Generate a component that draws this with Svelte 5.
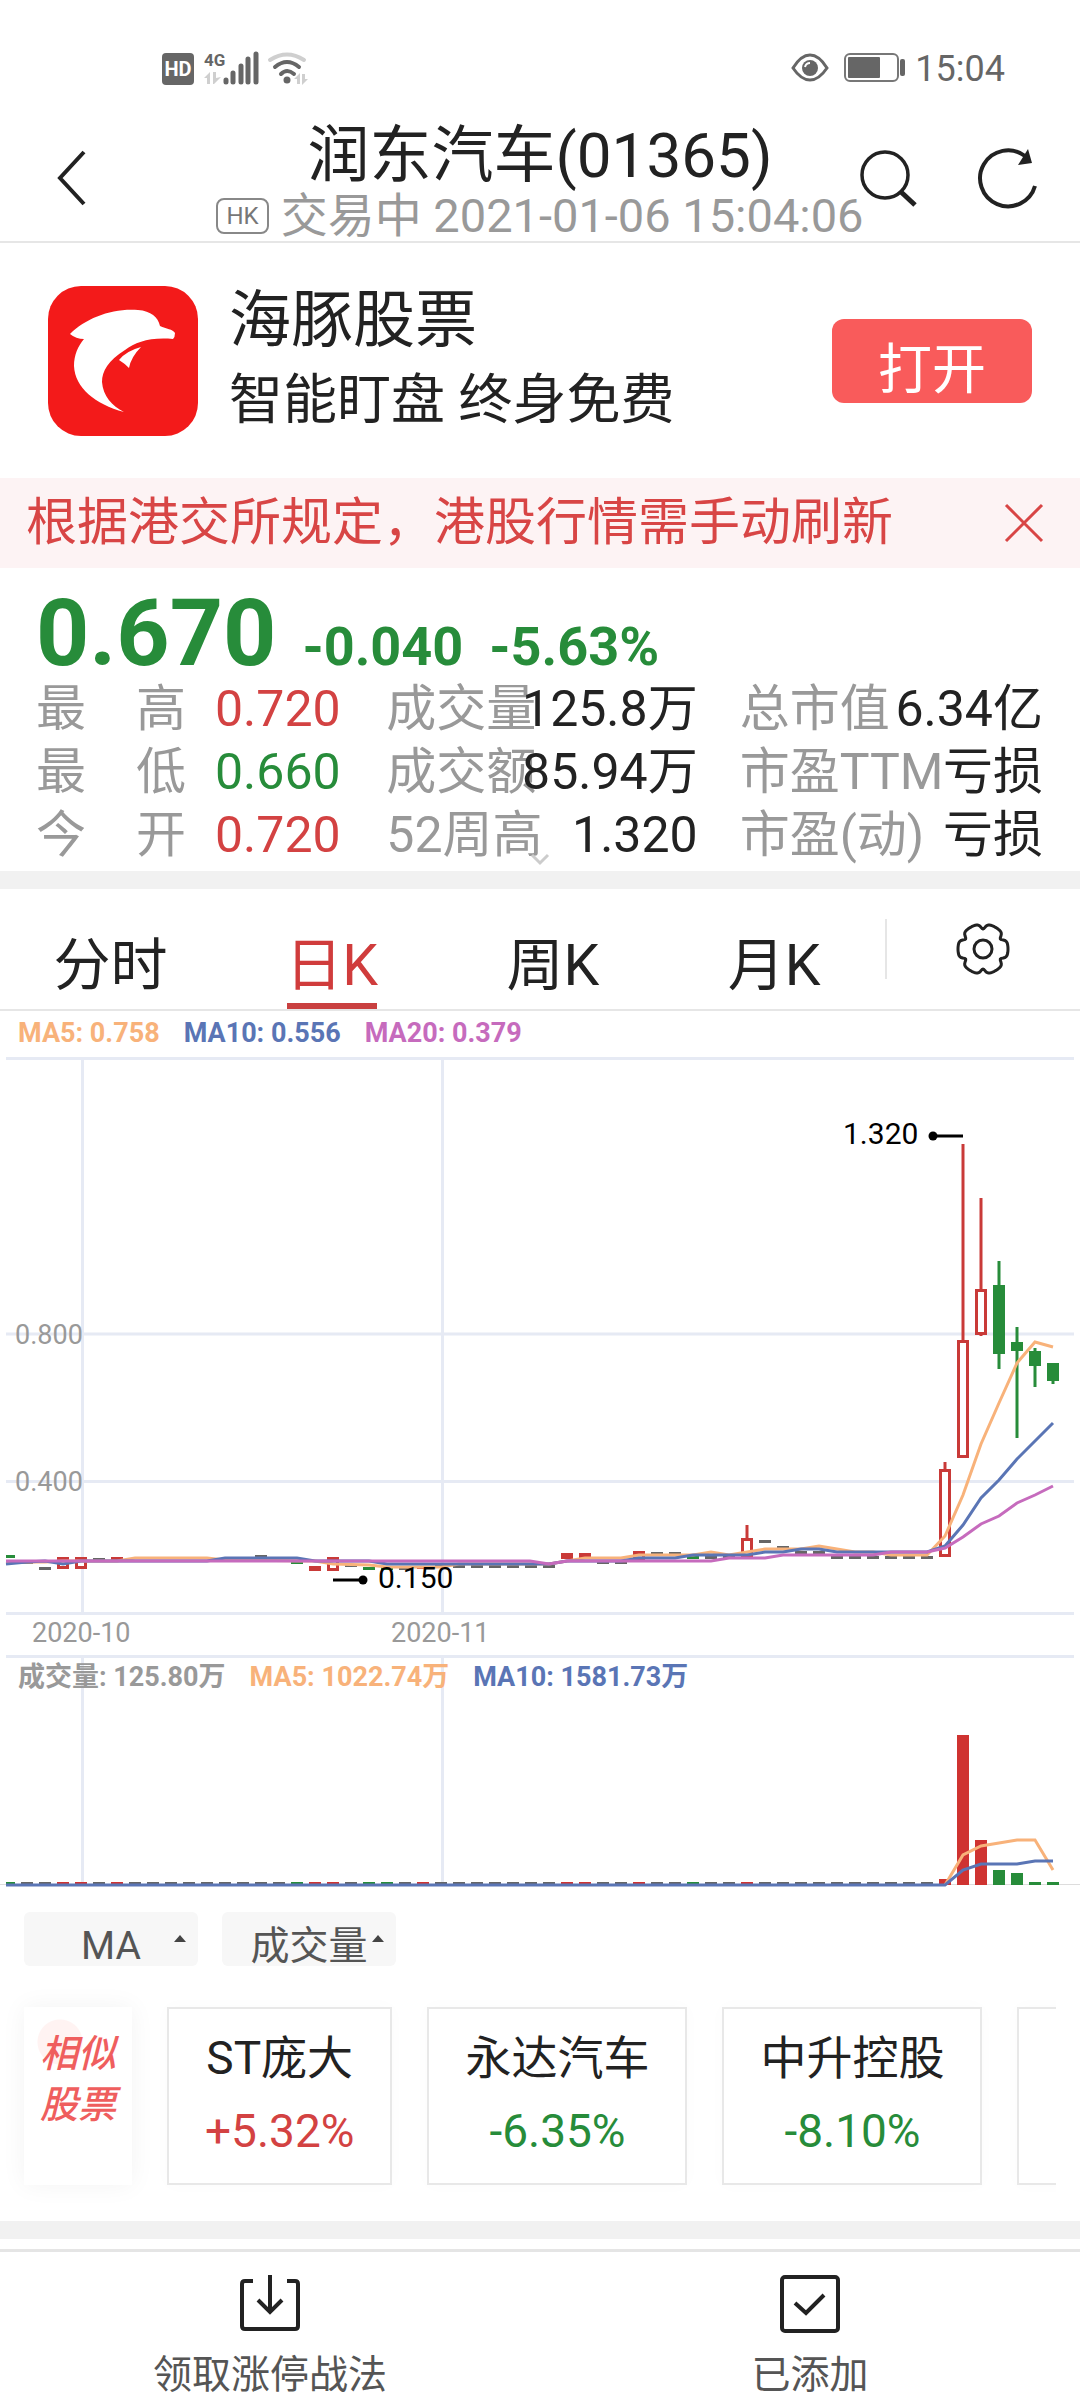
<script>
  const stats = [
    { label: '最　高', value: '0.720', tone: 'up' },
    { label: '成交量', value: '125.8万', tone: '' },
    { label: '总市值', value: '6.34亿', tone: '' },
    { label: '最　低', value: '0.660', tone: 'down' },
    { label: '成交额', value: '85.94万', tone: '' },
    { label: '市盈TTM', value: '亏损', tone: '' },
    { label: '今　开', value: '0.720', tone: 'up' },
    { label: '52周高', value: '1.320', tone: '' },
    { label: '市盈(动)', value: '亏损', tone: '' }
  ];

  const tabs = ['分时', '日K', '周K', '月K'];
  let active = $state('日K');
  let noticeOpen = $state(true);

  // Gear outline: a circle with six soft notches
  const gear = Array.from({ length: 120 }, (_, i) => {
    const deg = i * 3;
    const d = (((deg - 30) % 60) + 60) % 60;
    const off = Math.min(d, 60 - d);
    const r = 25 - 5 * Math.exp(-((off / 8) ** 2));
    const a = (deg * Math.PI) / 180;
    return `${(r * Math.cos(a)).toFixed(2)},${(r * Math.sin(a)).toFixed(2)}`;
  }).join(' ');

  const RED = '#c93a38';
  const GREEN = '#278c3a';
  const GREY = '#666';

  // Days without a move are a short dash: [x, y, colour]
  const dashes = [
    [9, 1556, GREEN], [27, 1562, GREY], [45, 1568, GREY], [99, 1559, GREY], [117, 1558, RED],
    [261, 1556, GREY], [297, 1562, GREEN], [351, 1565, GREY], [369, 1568, GREEN], [387, 1568, GREEN],
    [405, 1568, GREY], [423, 1567, RED],
    ...[441, 459, 477, 495, 513, 531, 549].map((x) => [x, 1566, GREY]),
    [603, 1562, GREY], [621, 1562, GREY], [657, 1553, GREY], [675, 1553, GREY],
    [693, 1557, GREEN], [711, 1557, GREY], [729, 1557, GREY],
    [765, 1541, GREY], [783, 1547, GREY], [801, 1552, GREY], [819, 1552, GREY],
    ...[837, 855, 873, 891, 909, 927].map((x) => [x, 1557, GREY])
  ];

  // [x, high, bodyTop, bodyBottom, low, kind]
  const candles = [
    [63, 1557, 1557, 1569, 1569, 'rise'],
    [81, 1557, 1557, 1569, 1569, 'rise'],
    [315, 1566, 1566, 1571, 1571, 'solid'],
    [333, 1557, 1557, 1571, 1571, 'rise'],
    [567, 1553, 1553, 1559, 1559, 'solid'],
    [585, 1553, 1553, 1559, 1559, 'solid'],
    [639, 1551, 1551, 1562, 1562, 'rise'],
    [747, 1525, 1538, 1557, 1557, 'rise'],
    [945, 1462, 1469, 1557, 1557, 'rise'],
    [963, 1144, 1340, 1458, 1458, 'rise'],
    [981, 1198, 1289, 1335, 1336, 'rise'],
    [999, 1261, 1285, 1354, 1369, 'fall'],
    [1017, 1327, 1342, 1351, 1438, 'fall'],
    [1035, 1348, 1351, 1366, 1387, 'fall'],
    [1053, 1363, 1363, 1381, 1384, 'fall']
  ];

  const ma5 = '6,1562 45,1562 63,1561 117,1561 135,1558 207,1558 225,1560 315,1561 333,1564 369,1565 387,1567 441,1567 459,1564 549,1564 567,1561 585,1558 621,1558 639,1555 693,1555 711,1552 729,1555 747,1552 765,1549 801,1549 819,1546 837,1549 855,1552 873,1552 891,1555 927,1555 945,1536 963,1495 981,1444 999,1403 1017,1363 1035,1342 1053,1347';
  const ma10 = '6,1564 27,1562 45,1561 63,1564 81,1561 207,1561 225,1558 297,1558 315,1561 369,1561 387,1564 549,1564 567,1561 621,1561 639,1558 675,1558 693,1555 747,1555 765,1552 783,1552 801,1549 819,1549 837,1552 927,1552 945,1546 963,1525 981,1498 999,1480 1017,1459 1035,1441 1053,1423';
  const ma20 = '6,1561 530,1561 549,1564 567,1561 711,1561 729,1558 765,1558 783,1555 873,1555 891,1552 927,1552 945,1548 963,1537 981,1524 999,1516 1017,1503 1035,1495 1053,1486';

  const volRed = [63, 81, 117, 315, 333, 423, 567, 585, 639, 747, 945, 963, 981];
  const volGreen = [9, 297, 369, 387, 693, 999, 1017, 1035, 1053];
  const volTop = { 945: 1879, 963: 1735, 981: 1840, 999: 1870, 1017: 1873 };
  const volumes = Array.from({ length: 59 }, (_, i) => {
    const x = 9 + i * 18;
    const color = volRed.includes(x) ? '#cf3331' : volGreen.includes(x) ? GREEN : GREY;
    return { x, top: volTop[x] ?? 1882, color };
  });

  const peers = [
    { name: 'ST庞大', change: '+5.32%', tone: 'up' },
    { name: '永达汽车', change: '-6.35%', tone: 'down' },
    { name: '中升控股', change: '-8.10%', tone: 'down' }
  ];
</script>

<div class="page">
  <div class="status">
    <svg width="146" height="34" viewBox="162 51 146 34" aria-hidden="true">
      <rect x="162" y="53" width="32" height="32" rx="4" fill="#666" />
      <text x="178" y="76" font-size="20" font-weight="700" fill="#fff" text-anchor="middle">HD</text>
      <text x="204" y="66" font-size="17" font-weight="700" fill="#666">4G</text>
      <g stroke="#666" stroke-width="5" stroke-linecap="round">
        <path d="M226 80v2M233 73v9M241 66v16M248 59v23M256 54v28" />
      </g>
      <g fill="#cfcfcf">
        <path d="M204 78l6-6v12h-3v-6zM213 72h3v6l5-1-7 7h-1zM294 79l6-6v11h-3v-5zM302 74h3v5l3 0-6 6z" />
      </g>
      <g fill="none" stroke-linecap="round">
        <path d="M270 60Q287 49 304 60" stroke="#cfcfcf" stroke-width="4" />
        <path d="M275 67Q287 57 299 67" stroke="#666" stroke-width="4" />
        <path d="M281 74Q287 68 294 74" stroke="#666" stroke-width="4" />
      </g>
      <circle cx="287" cy="80" r="3.5" fill="#666" />
    </svg>
    <div class="right">
      <svg width="114" height="32" viewBox="793 53 114 32" aria-hidden="true">
        <path d="M794 69Q802 56 811 56T828 69Q820 81 811 81T794 69Z" fill="none" stroke="#666" stroke-width="3" />
        <circle cx="811" cy="69" r="8" fill="#666" />
        <path d="M806 68q1-4 5-4" fill="none" stroke="#fff" stroke-width="2" />
        <rect x="846" y="55" width="53" height="27" rx="5" fill="none" stroke="#777" stroke-width="2" />
        <rect x="849" y="58" width="32" height="21" rx="1" fill="#666" />
        <rect x="901" y="60" width="5" height="17" rx="2" fill="#666" />
      </svg>
      <span class="clock">15:04</span>
    </div>
  </div>

  <header>
    <button class="icon" aria-label="返回">
      <svg width="32" height="60" viewBox="56 148 32 60"><path d="M84 150L60 176L84 202" fill="none" stroke="#222" stroke-width="4" /></svg>
    </button>
    <div class="heading">
      <h1>润东汽车(01365)</h1>
      <p><span class="hk">HK</span>交易中 2021-01-06 15:04:06</p>
    </div>
    <div class="actions">
      <button class="icon" aria-label="搜索">
        <svg width="56" height="58" viewBox="861 150 56 58" fill="none" stroke="#222">
          <circle cx="885" cy="174" r="23" stroke-width="3.5" />
          <path d="M900 190L915 204" stroke-width="5" />
        </svg>
      </button>
      <button class="icon" aria-label="刷新">
        <svg width="60" height="60" viewBox="978 149 60 60">
          <path d="M1035 185A28 28 0 1 1 1025 155" fill="none" stroke="#222" stroke-width="4" />
          <path d="M1028 148L1032 162L1018 164Z" fill="#222" />
        </svg>
      </button>
    </div>
  </header>

  <section class="promo">
    <svg width="150" height="150" viewBox="48 286 150 150" aria-hidden="true">
      <rect x="48" y="286" width="150" height="150" rx="33" fill="#f31a1a" />
      <path d="M70 334C86 318 112 308 138 310C151 311 158 317 160 326C166 329 173 329 175 333Q175 337 173 339C150 337 136 342 125 350C108 361 102 371 102 382C103 396 112 406 124 412C95 404 75 388 74 366C74 355 78 346 84 339Q76 339 70 334Z" fill="#fff" />
      <path d="M141 347Q126 351 119 360Q124 363 129 368Q131 357 141 347Z" fill="#fff" />
    </svg>
    <div class="words">
      <div class="name">海豚股票</div>
      <div class="slogan">智能盯盘 终身免费</div>
    </div>
    <button class="open">打开</button>
  </section>

  {#if noticeOpen}
    <div class="notice">
      <span>根据港交所规定，港股行情需手动刷新</span>
      <button class="icon" aria-label="关闭" onclick={() => (noticeOpen = false)}>
        <svg width="40" height="40" viewBox="0 0 40 40"><path d="M2 2L38 38M38 2L2 38" stroke="#d84545" stroke-width="3" /></svg>
      </button>
    </div>
  {/if}

  <section class="quote">
    <div class="price"><b class="last">0.670</b><b>-0.040</b><b>-5.63%</b></div>
    <dl>
      {#each stats as s, i}
        <div class="stat" class:first={i % 3 === 0}>
          <dt>{s.label}</dt>
          <dd class={s.tone}>{s.value}</dd>
        </div>
      {/each}
    </dl>
    <svg class="more" width="20" height="12" viewBox="0 0 20 12" aria-hidden="true"><path d="M2 2L10 10L18 2" fill="none" stroke="#ccc" stroke-width="3" /></svg>
  </section>
  <div class="band"></div>

  <nav class="tabs">
    {#each tabs as t}
      <button class="tab" class:active={active === t} onclick={() => (active = t)}>{t}</button>
    {/each}
    <div class="setting">
      <button class="icon" aria-label="设置">
        <svg width="54" height="54" viewBox="-27 -27 54 54" fill="none" stroke="#222" stroke-width="3">
          <polygon points={gear} stroke-linejoin="round" />
          <circle r="9" />
        </svg>
      </button>
    </div>
  </nav>

  <div class="legend">
    <span class="o">MA5: 0.758</span><span class="b">MA10: 0.556</span><span class="p">MA20: 0.379</span>
  </div>
  <svg class="plot" viewBox="0 1057 1080 598" role="img" aria-label="日K线">
    <g stroke="#e6eaf4" stroke-width="3">
      <path d="M6 1058.500H1074M6 1334H1074M6 1481.500H1074M6 1613.500H1074M82.500 1060V1612M442.500 1060V1612" />
    </g>
    <g font-size="27" fill="#999">
      <text x="15" y="1344">0.800</text>
      <text x="15" y="1491">0.400</text>
      <text x="32" y="1642">2020-10</text>
      <text x="391" y="1642">2020-11</text>
    </g>
    {#each dashes as [x, y, c]}
      <rect x={Math.max(6, x - 6)} y={y - 1} width={x === 9 ? 9 : 12} height="3" fill={c} />
    {/each}
    {#each candles as [x, high, top, bottom, low, kind]}
      {@const c = kind === 'fall' ? GREEN : RED}
      <path d="M{x} {high}V{top}M{x} {bottom}V{low}" stroke={c} stroke-width="3" />
      {#if kind === 'rise'}
        <rect x={x - 4.5} y={top + 1.5} width="9" height={bottom - top - 3} fill="#fff" stroke={c} stroke-width="3" />
      {:else}
        <rect x={x - 6} y={top} width="12" height={bottom - top} fill={c} />
      {/if}
    {/each}
    <g fill="none" stroke-width="3">
      <polyline points={ma5} stroke="#f8b27a" />
      <polyline points={ma10} stroke="#5a75b5" />
      <polyline points={ma20} stroke="#c66bbd" />
    </g>
    <path d="M933 1136H963M333 1580H363" stroke="#000" stroke-width="3" />
    <circle cx="933" cy="1136" r="4.5" />
    <circle cx="363" cy="1580" r="4.5" />
    <text x="843" y="1144" font-size="30">1.320</text>
    <text x="378" y="1588" font-size="30">0.150</text>
  </svg>

  <div class="volume">
    <svg class="plot" viewBox="0 1655 1080 230" role="img" aria-label="成交量图">
      <path d="M6 1656.500H1074M82.500 1658V1884M442.500 1658V1884" stroke="#e6eaf4" stroke-width="3" />
      <path d="M0 1884.500H1080" stroke="#ddd" />
      {#each volumes as v}
        <rect x={Math.max(6, v.x - 6)} y={v.top} width={v.x === 9 ? 9 : 12} height={1885 - v.top} fill={v.color} />
      {/each}
      <g fill="none" stroke-width="3">
        <polyline points="945,1885 963,1855 981,1846 999,1843 1017,1840 1035,1840 1053,1870" stroke="#f8b27a" />
        <polyline points="6,1885 945,1885 963,1870 981,1864 1017,1864 1035,1861 1053,1861" stroke="#5a75b5" />
      </g>
    </svg>
    <div class="legend">
      <span class="g">成交量: 125.80万</span><span class="o">MA5: 1022.74万</span><span class="b">MA10: 1581.73万</span>
    </div>
  </div>

  <div class="pickers">
    <div class="picker"><select aria-label="主图指标"><option>MA</option></select><i></i></div>
    <div class="picker"><select aria-label="副图指标"><option>成交量</option></select><i></i></div>
  </div>

  <section class="similar">
    <h2>相似<br />股票</h2>
    {#each peers as p}
      <a href="#{p.name}" class="peer"><span>{p.name}</span><span class={p.tone}>{p.change}</span></a>
    {/each}
    <div class="peer rest"></div>
  </section>
  <div class="band"></div>

  <footer>
    <button>
      <svg width="60" height="58" viewBox="240 2275 60 58" fill="none" stroke="#222" stroke-width="4">
        <path d="M253 2281H245Q242 2281 242 2284V2326Q242 2329 245 2329H295Q298 2329 298 2326V2284Q298 2281 295 2281H287M270 2275V2311M258 2300L270 2312L282 2300" />
      </svg>
      领取涨停战法
    </button>
    <button>
      <svg width="60" height="58" viewBox="780 2275 60 58" fill="none" stroke="#222" stroke-width="4">
        <rect x="782" y="2277" width="56" height="54" rx="3" />
        <path d="M795 2303L806 2313L824 2295" />
      </svg>
      已添加
    </button>
  </footer>
</div>

<style>
  :global(body) {
    background: #fff;
  }
  .page {
    font-family: Roboto, 'Noto Sans CJK SC', sans-serif;
    color: #222;
    overflow: hidden;
  }
  button {
    border: 0;
    padding: 0;
    background: none;
    font: inherit;
    color: inherit;
    cursor: pointer;
  }
  svg {
    display: block;
    flex: none;
    overflow: visible;
  }
  h1, h2, p, dl, dd {
    margin: 0;
    font-weight: 400;
  }
  .up { color: #d34242; }
  .down { color: #278c3a; }

  .status {
    display: flex;
    justify-content: space-between;
    align-items: center;
    height: 100px;
    padding: 36px 75px 0 162px;
    box-sizing: border-box;
  }
  .right {
    display: flex;
    align-items: center;
    gap: 9px;
  }
  .clock {
    padding-top: 2px;
    font-size: 36px;
    line-height: 36px;
    color: #666;
  }

  header {
    display: grid;
    grid-template-columns: minmax(0, 1fr) auto minmax(0, 1fr);
    align-items: center;
    padding: 20px 0 1px;
    border-bottom: 2px solid #e6e6e6;
  }
  header > .icon {
    justify-self: start;
    margin-left: 56px;
  }
  .heading {
    text-align: center;
    white-space: nowrap;
  }
  h1 {
    font-size: 62px;
    line-height: 72px;
  }
  .heading p {
    display: flex;
    align-items: center;
    justify-content: center;
    gap: 12px;
    font-size: 47px;
    line-height: 48px;
    color: #999;
  }
  .hk {
    border: 2px solid #888;
    border-radius: 8px;
    padding: 0 8px;
    font-size: 24px;
    line-height: 32px;
    color: #777;
  }
  .actions {
    display: flex;
    justify-self: end;
    gap: 61px;
    margin-right: 42px;
  }

  .promo {
    display: flex;
    align-items: center;
    padding: 38px 48px 37px;
  }
  .words {
    flex: 1;
    margin-left: 31px;
    line-height: 80px;
  }
  .name { font-size: 62px; }
  .slogan { font-size: 54px; }
  .open {
    width: 200px;
    height: 84px;
    padding-top: 20px;
    border-radius: 12px;
    background: #f95b5b;
    color: #fff;
    font-size: 54px;
    line-height: 64px;
  }

  .notice {
    display: flex;
    align-items: center;
    justify-content: space-between;
    padding: 0 36px 0 26px;
    background: #fdf3f4;
    color: #d84545;
    font-size: 51px;
    line-height: 90px;
  }

  .quote {
    position: relative;
    padding: 22px 37px 4px 36px;
  }
  .price {
    display: flex;
    align-items: baseline;
    gap: 26px;
    height: 88px;
    color: #278c3a;
    font-size: 54px;
    line-height: 60px;
  }
  .last {
    font-size: 93px;
    line-height: 88px;
  }
  dl {
    display: grid;
    grid-template-columns: 308fr 311fr 303fr;
    column-gap: 42px;
    font-size: 50px;
    line-height: 63px;
    white-space: nowrap;
  }
  .stat {
    display: flex;
    justify-content: space-between;
    min-width: 0;
  }
  .stat.first {
    justify-content: flex-start;
    gap: 29px;
  }
  dt {
    min-width: 0;
    color: #999;
  }
  dd { flex: none; }
  .more {
    position: absolute;
    bottom: 6px;
    left: 50%;
    margin-left: -10px;
  }
  .band {
    height: 18px;
    background: #f1f1f1;
  }

  .tabs {
    display: flex;
    align-items: center;
    border-bottom: 2px solid #e6e6e6;
  }
  .tab {
    position: relative;
    flex: 222 1 0;
    padding-top: 34px;
    font-size: 57px;
    line-height: 86px;
  }
  .active { color: #d03c3c; }
  .active::after {
    content: '';
    position: absolute;
    left: 50%;
    bottom: 0;
    width: 90px;
    height: 6px;
    margin-left: -45px;
    background: #c94040;
  }
  .setting {
    flex: 194 1 0;
    display: flex;
    align-items: center;
    justify-content: center;
    height: 60px;
    border-left: 2px solid #e6e6e6;
  }

  .legend {
    display: flex;
    gap: 24px;
    padding: 0 18px 2px;
    font-size: 27px;
    font-weight: 700;
    line-height: 44px;
    white-space: nowrap;
  }
  .o { color: #f8b27a; }
  .b { color: #5a75b5; }
  .p { color: #c66bbd; }
  .g { color: #999; }
  .plot {
    width: 100%;
    height: auto;
  }
  .volume { display: grid; }
  .volume > * {
    grid-area: 1 / 1;
    align-self: start;
  }

  .pickers {
    display: flex;
    gap: 24px;
    padding: 27px 24px 41px;
  }
  .picker {
    position: relative;
    width: 174px;
  }
  select {
    display: block;
    width: 100%;
    height: 54px;
    padding: 14px 0 0;
    border: 0;
    border-radius: 6px;
    appearance: none;
    background: #f7f7f7;
    font: 39px Roboto, 'Noto Sans CJK SC', sans-serif;
    line-height: 40px;
    color: #555;
    text-align: center;
    text-align-last: center;
  }
  i {
    position: absolute;
    right: 12px;
    top: 23px;
    border: 6px solid transparent;
    border-top: 0;
    border-bottom: 7px solid #444;
    pointer-events: none;
  }

  .similar {
    display: flex;
    gap: 35px;
    margin: 0 24px 36px;
    height: 178px;
    clip-path: inset(-30px 0 -30px -24px);
  }
  h2 {
    flex: none;
    box-sizing: border-box;
    width: 108px;
    padding-top: 22px;
    background: radial-gradient(circle at 36px 35px, #fff3f2 0 22px, transparent 23px), #fff;
    box-shadow: 0 0 24px rgba(0, 0, 0, 0.05);
    color: #ef5e5e;
    font-size: 38px;
    font-weight: 500;
    font-style: italic;
    line-height: 51px;
    text-align: center;
  }
  .peer {
    display: flex;
    flex: none;
    flex-direction: column;
    align-items: center;
    box-sizing: border-box;
    padding: 13px 36px;
    border: 2px solid #e8e8e8;
    box-shadow: 0 0 16px rgba(0, 0, 0, 0.02);
    color: #222;
    font-size: 46px;
    line-height: 73px;
    text-decoration: none;
  }
  .peer .up { color: #d34242; }
  .peer .down { color: #278c3a; }
  .rest { width: 260px; }

  footer {
    display: flex;
    margin-top: 10px;
    padding: 23px 0 3px;
    border-top: 3px solid #e5e5e5;
  }
  footer button {
    flex: 1;
    display: flex;
    flex-direction: column;
    align-items: center;
    gap: 20px;
    color: #555;
    font-size: 39px;
    line-height: 44px;
  }
</style>
